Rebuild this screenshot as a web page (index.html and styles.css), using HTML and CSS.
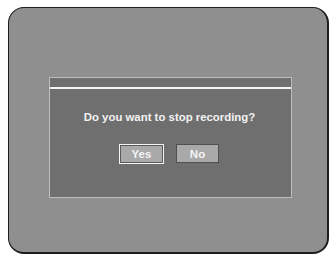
FILE: index.html
```html
<!DOCTYPE html>
<html>
<head>
<meta charset="utf-8">
<link rel="stylesheet" href="styles.css">
</head>
<body>
<div class="screen">
  <div class="dialog">
    <div class="title"></div>
    <div class="bar"></div>
    <div class="body">
      <p class="msg">Do you want to stop recording?</p>
      <div class="buttons">
        <div class="btn sel"><span>Yes</span></div>
        <div class="btn"><span>No</span></div>
      </div>
    </div>
  </div>
</div>
</body>
</html>
```
FILE: styles.css
```css
html, body {
  margin: 0;
  padding: 0;
  background: #ffffff;
}
body {
  width: 332px;
  height: 256px;
  overflow: hidden;
  font-family: "Liberation Sans", Arial, sans-serif;
}
.screen {
  box-sizing: border-box;
  margin: 7px 0 0 8px;
  width: 321px;
  height: 247px;
  border: 1.5px solid #1e1e1e;
  border-right-width: 2px;
  border-bottom-width: 2px;
  border-radius: 16px;
  background: #8f8f8f;
  padding: 68.5px 0 0 39.5px;
}
.dialog {
  box-sizing: border-box;
  width: 243px;
  height: 121px;
  border: 1px solid #bdbdbd;
  background: #6f6f6f;
  display: flex;
  flex-direction: column;
}
.title {
  height: 9px;
}
.bar {
  height: 2px;
  background: #f4f4f4;
}
.body {
  flex: 1;
  display: flex;
  flex-direction: column;
  align-items: center;
}
.msg {
  margin: 21px 0 0 -1px;
  color: #f2f2f2;
  font-weight: bold;
  font-size: 11.4px;
  line-height: 14px;
}
.buttons {
  margin: 20px 0 0 -2px;
  display: flex;
  gap: 12px;
  align-items: center;
}
.btn {
  box-sizing: border-box;
  width: 43px;
  height: 19px;
  border: 1.5px solid #505050;
  background: #a9a9a9;
  display: flex;
  align-items: center;
  justify-content: center;
}
.btn.sel {
  width: 45px;
  height: 20px;
  border: 1.5px solid #f4f4f4;
  box-shadow: inset 0 0 0 1px #5a5a5a;
}
.btn span {
  color: #f4f4f4;
  font-weight: bold;
  font-size: 11.5px;
  line-height: 14px;
}
```
